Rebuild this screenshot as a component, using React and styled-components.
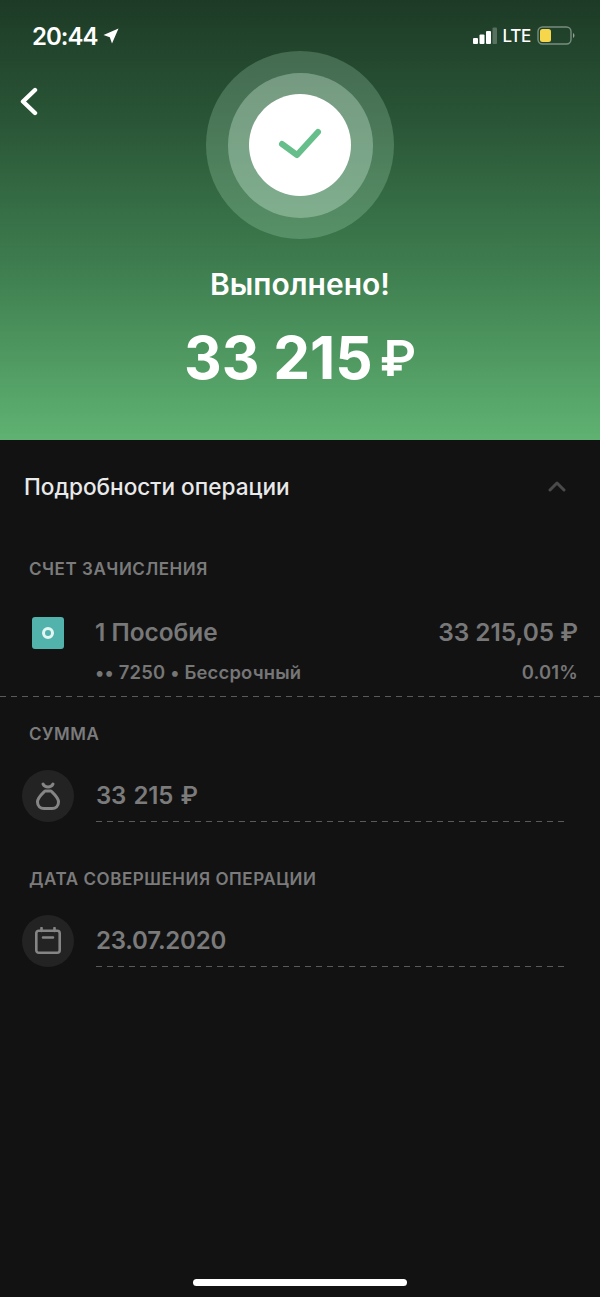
import styled, { createGlobalStyle } from "styled-components";

const GlobalStyle = createGlobalStyle`
  html, body {
    margin: 0;
    padding: 0;
    background: #121213;
  }
  * {
    box-sizing: border-box;
  }
`;

const Screen = styled.div`
  width: 600px;
  height: 1297px;
  display: flex;
  flex-direction: column;
  background: #121213;
  font-family: Inter, "Liberation Sans", sans-serif;
  overflow: hidden;
`;

const Hero = styled.header`
  height: 440px;
  flex: none;
  display: flex;
  flex-direction: column;
  align-items: center;
  background: linear-gradient(180deg, #1d3a26 0%, #2a5637 28%, #3f7f50 62%, #5fb272 100%);
  color: #fff;
`;

const StatusBar = styled.div`
  width: 100%;
  height: 51px;
  padding: 21px 24px 0 32px;
  display: flex;
  align-items: flex-start;
  justify-content: space-between;
`;

const Time = styled.div`
  display: flex;
  align-items: center;
  gap: 6px;
  height: 30px;
  font-size: 24px;
  font-weight: 600;
  letter-spacing: -1px;
`;

const StatusRight = styled.div`
  display: flex;
  align-items: center;
  gap: 6px;
  height: 30px;
`;

const Lte = styled.span`
  font-size: 17px;
  font-weight: 500;
  letter-spacing: -0.3px;
`;

const RingRow = styled.div`
  width: 100%;
  display: grid;
  grid-template-columns: 1fr auto 1fr;
`;

const BackButton = styled.div`
  padding: 36px 0 0 19px;
`;

const Ring = styled.div`
  width: ${(p) => p.size}px;
  height: ${(p) => p.size}px;
  border-radius: 50%;
  display: flex;
  align-items: center;
  justify-content: center;
  background: ${(p) => p.bg};
`;

const Title = styled.h1`
  margin: 27px 0 0;
  font-size: 30px;
  line-height: 36px;
  font-weight: 600;
`;

const Amount = styled.div`
  margin-top: 20px;
  display: flex;
  align-items: center;
  font-size: 58.5px;
  line-height: 72px;
  font-weight: 700;
`;

const AmountCurrency = styled.span`
  margin-left: 7px;
  font-size: 50px;
  font-weight: 600;
`;

const DetailsHead = styled.div`
  height: 92px;
  padding: 0 34px 0 24px;
  display: flex;
  align-items: center;
  justify-content: space-between;
  font-size: 22.6px;
  font-weight: 500;
  color: #e9e9e9;
`;

const SectionLabel = styled.div`
  padding-left: 29px;
  margin-top: ${(p) => p.top}px;
  font-size: 17px;
  line-height: 22px;
  font-weight: 600;
  letter-spacing: 0.55px;
  color: #7b7b7b;
`;

const AccountRow = styled.div`
  margin-top: 37px;
  padding: 0 22px 0 32px;
  display: flex;
  align-items: flex-start;
  gap: 31px;
`;

const AccountBadge = styled.div`
  width: 32px;
  height: 32px;
  flex: none;
  border-radius: 3px;
  display: flex;
  align-items: center;
  justify-content: center;
  background: #52b3ac;
`;

const AccountDot = styled.div`
  width: 12px;
  height: 12px;
  border-radius: 50%;
  border: 3px solid #e4f6f4;
`;

const AccountInfo = styled.div`
  flex: 1;
  display: flex;
  flex-direction: column;
  gap: 13px;
`;

const InfoLine = styled.div`
  display: flex;
  justify-content: space-between;
  align-items: center;
`;

const AccountName = styled.span`
  font-size: 24.4px;
  line-height: 30px;
  font-weight: 600;
  color: #787878;
`;

const AccountMeta = styled.span`
  font-size: 18.4px;
  line-height: 24px;
  font-weight: 600;
  letter-spacing: 0.2px;
  color: #767676;
`;

const Dashes = styled.div`
  height: 1px;
  margin: ${(p) => p.margin || "0"};
  background: repeating-linear-gradient(90deg, #5a5a5a 0 6px, transparent 6px 11px);
`;

const FieldRow = styled.div`
  margin-top: 25px;
  padding-left: 22px;
  display: flex;
  align-items: center;
  gap: 22px;
`;

const FieldIcon = styled.div`
  width: 52px;
  height: 52px;
  flex: none;
  border-radius: 50%;
  display: flex;
  align-items: center;
  justify-content: center;
  background: #232324;
`;

const FieldValue = styled.div`
  font-size: 24px;
  line-height: 32px;
  font-weight: 600;
  letter-spacing: -0.2px;
  word-spacing: 1.5px;
  color: #7b7b7b;
`;

const HomeIndicator = styled.div`
  width: 214px;
  height: 7px;
  margin: auto auto 11px;
  border-radius: 4px;
  background: #fff;
`;

function App() {
  return (
    <Screen>
      <GlobalStyle />
      <Hero>
        <StatusBar>
          <Time>
            20:44
            <svg width="16" height="16" viewBox="0 0 16 16">
              <path d="M15.5 0.5 L0.5 7 L6.8 9.2 L9 15.5 Z" fill="#fff" />
            </svg>
          </Time>
          <StatusRight>
            <svg width="24" height="18" viewBox="0 0 24 18">
              <rect x="0" y="11" width="5" height="6" rx="1" fill="#fff" />
              <rect x="6.5" y="7.5" width="5" height="9.5" rx="1" fill="#fff" />
              <rect x="13" y="4" width="5" height="13" rx="1" fill="#fff" />
              <rect x="19.5" y="0.5" width="4.5" height="16.5" rx="1" fill="#fff" opacity="0.25" />
            </svg>
            <Lte>LTE</Lte>
            <svg width="39" height="20" viewBox="0 0 39 20">
              <rect x="1" y="1" width="33" height="17" rx="4.5" fill="none" stroke="#fff" strokeOpacity="0.4" strokeWidth="1.4" />
              <rect x="3" y="3" width="11" height="13" rx="2.5" fill="#f6d64a" />
              <path d="M36 7 C38 8 38 11 36 12 Z" fill="#fff" fillOpacity="0.5" />
            </svg>
          </StatusRight>
        </StatusBar>
        <RingRow>
          <BackButton>
            <svg width="20" height="30" viewBox="0 0 20 30">
              <path d="M16 3 L4 14.5 L16 26" fill="none" stroke="#fff" strokeWidth="4.4" strokeLinecap="round" strokeLinejoin="round" />
            </svg>
          </BackButton>
          <Ring size={188} bg="rgba(205,255,222,0.2)">
            <Ring size={145} bg="rgba(228,255,238,0.3)">
              <Ring size={102} bg="#fff">
                <svg width="44" height="34" viewBox="0 0 44 34">
                  <path d="M4 16 L19 27 L40 4" fill="none" stroke="#66be8b" strokeWidth="6" strokeLinecap="round" strokeLinejoin="round" />
                </svg>
              </Ring>
            </Ring>
          </Ring>
          <div />
        </RingRow>
        <Title>Выполнено!</Title>
        <Amount>
          33 215
          <AmountCurrency>₽</AmountCurrency>
        </Amount>
      </Hero>

      <DetailsHead>
        Подробности операции
        <svg width="18" height="12" viewBox="0 0 18 12">
          <path d="M2 10 L9 3 L16 10" fill="none" stroke="#4a4a4a" strokeWidth="3" strokeLinecap="round" strokeLinejoin="round" />
        </svg>
      </DetailsHead>

      <SectionLabel top={26}>СЧЕТ ЗАЧИСЛЕНИЯ</SectionLabel>
      <AccountRow>
        <AccountBadge>
          <AccountDot />
        </AccountBadge>
        <AccountInfo>
          <InfoLine>
            <AccountName>1 Пособие</AccountName>
            <AccountName>33 215,05 ₽</AccountName>
          </InfoLine>
          <InfoLine>
            <AccountMeta>•• 7250 • Бессрочный</AccountMeta>
            <AccountMeta>0.01%</AccountMeta>
          </InfoLine>
        </AccountInfo>
      </AccountRow>
      <Dashes margin="12px 0 0" />

      <SectionLabel top={26}>СУММА</SectionLabel>
      <FieldRow>
        <FieldIcon>
          <svg width="26" height="30" viewBox="0 0 26 30">
            <path
              d="M8 3 C10 7 16 7 18 3 M10 10 H16 C19 13 23.5 16.5 23.5 21 C23.5 25.5 20.5 27.5 17 27.5 H9 C5.5 27.5 2.5 25.5 2.5 21 C2.5 16.5 7 13 10 10 Z"
              fill="none"
              stroke="#858585"
              strokeWidth="3"
              strokeLinecap="round"
              strokeLinejoin="round"
            />
          </svg>
        </FieldIcon>
        <FieldValue>33 215 ₽</FieldValue>
      </FieldRow>
      <Dashes margin="-1px 34px 0 96px" />

      <SectionLabel top={46}>ДАТА СОВЕРШЕНИЯ ОПЕРАЦИИ</SectionLabel>
      <FieldRow>
        <FieldIcon>
          <svg width="28" height="28" viewBox="0 0 28 28">
            <rect x="2.3" y="3.8" width="23.4" height="22" rx="2.5" fill="none" stroke="#858585" strokeWidth="2.6" />
            <path d="M7.5 1 V4 M20.5 1 V4 M9 10.5 H19" stroke="#858585" strokeWidth="2.6" strokeLinecap="round" />
          </svg>
        </FieldIcon>
        <FieldValue>23.07.2020</FieldValue>
      </FieldRow>
      <Dashes margin="-1px 34px 0 96px" />

      <HomeIndicator />
    </Screen>
  );
}

export default App;
